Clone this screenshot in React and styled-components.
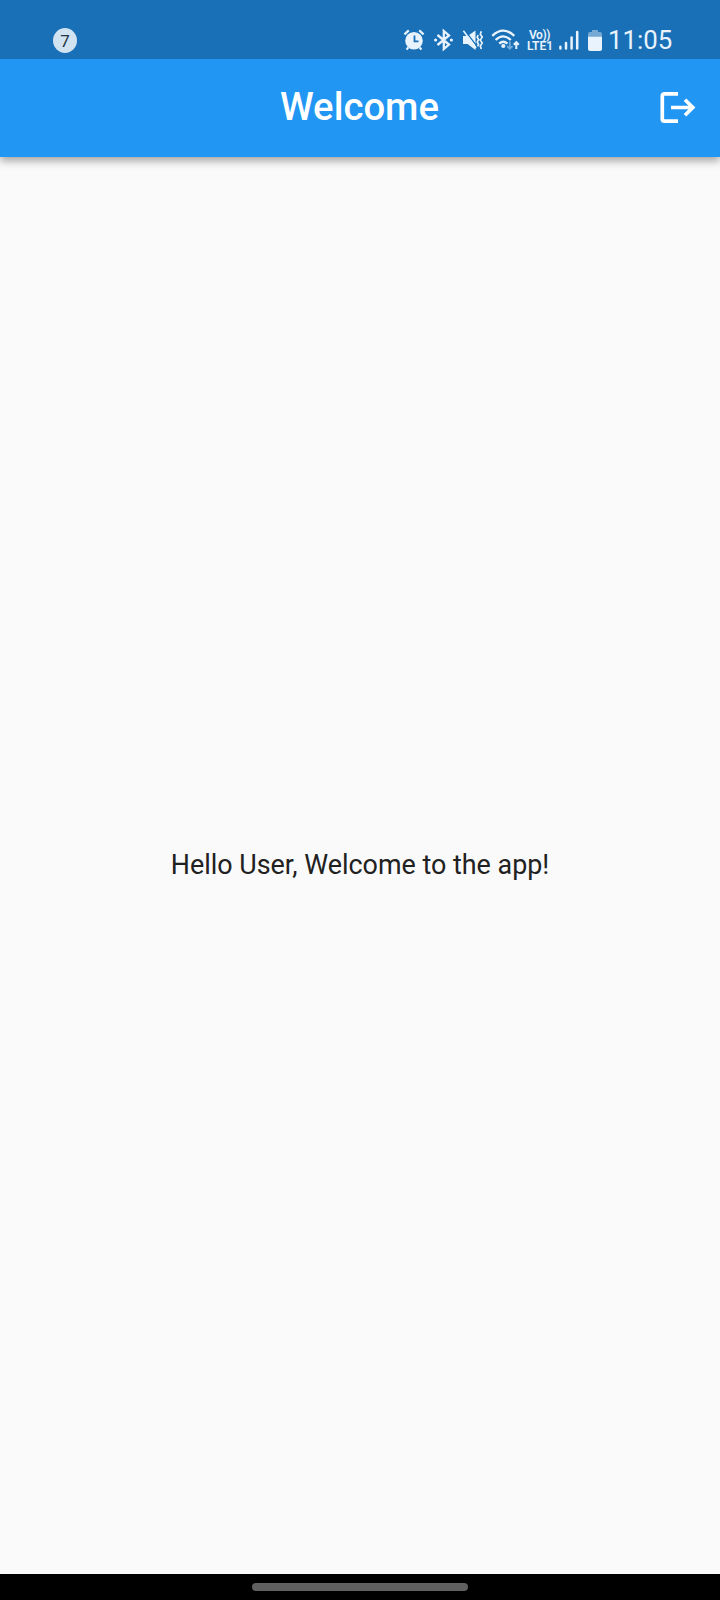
import React from 'react';
import styled, { createGlobalStyle } from 'styled-components';

const GlobalStyle = createGlobalStyle`
  * { box-sizing: border-box; }
  body { margin: 0; background: #fafafa; font-family: Roboto, sans-serif; }
`;

const Screen = styled.div`
  display: flex;
  flex-direction: column;
  width: 720px;
  height: 1600px;
  background: #fafafa;
`;

const StatusBar = styled.header`
  display: flex;
  align-items: flex-start;
  justify-content: space-between;
  height: 59px;
  padding: 28px 48px 0 53px;
  background: #1a70b7;
`;

const Notification = styled.span`
  width: 24px;
  height: 25px;
  border-radius: 50%;
  background: #d1e2f1;
  color: #26353f;
  font-size: 17px;
  line-height: 26px;
  text-align: center;
`;

const StatusIcons = styled.div`
  display: flex;
  align-items: flex-start;
  color: #e8f3fd;
`;

const Glyph = styled.svg`
  display: block;
  flex: none;
  margin-right: ${(p) => p.$gap || 0}px;
  overflow: visible;
`;

const Network = styled.div`
  width: 28px;
  margin-right: 4px;
  padding-top: 2px;
  font-family: Roboto, sans-serif;
  font-size: 12px;
  font-weight: 600;
  line-height: 11px;
  text-align: left;
  white-space: nowrap;
`;

const NetworkLine = styled.div`
  padding-left: ${(p) => p.$indent || 0}px;
  letter-spacing: ${(p) => p.$tracking}px;
`;

const Clock = styled.time`
  width: 64px;
  font-size: 25.8px;
  line-height: 24px;
  white-space: nowrap;
`;

const AppBar = styled.div`
  display: grid;
  grid-template-columns: 84px 1fr 84px;
  align-items: center;
  height: 98px;
  background: #2196f3;
  box-shadow: 0 4px 8px rgba(0, 0, 0, 0.34);
  clip-path: inset(0 0 -16px 0);
  color: #fff;
`;

const Title = styled.h1`
  grid-column: 2;
  margin: 0;
  padding: 0 1px 2px 0;
  font-size: 38.3px;
  font-weight: 500;
  line-height: 44px;
  text-align: center;
`;

const LogoutButton = styled.button`
  display: flex;
  padding: 0 0 0 24px;
  border: 0;
  background: none;
  color: inherit;
`;

const Content = styled.main`
  display: flex;
  flex: 1;
  align-items: center;
  justify-content: center;
`;

const Greeting = styled.p`
  margin: 0;
  padding-bottom: 2px;
  color: #212121;
  font-size: 26.9px;
  line-height: 32px;
  white-space: nowrap;
`;

const NavigationBar = styled.footer`
  display: flex;
  justify-content: center;
  height: 26px;
  padding-top: 9px;
  background: #000;
`;

const Handle = styled.div`
  width: 216px;
  height: 8px;
  border-radius: 4px;
  background: #606060;
`;

const AlarmIcon = () => (
  <Glyph width="20" height="24" $gap={10} fill="currentColor">
    <path d="M.4 6.4 4.8 2.4M19.6 6.4 15.2 2.4M4.3 19.3 2.6 21.6M15.7 19.3 17.4 21.6" stroke="currentColor" strokeWidth="2.2" />
    <circle cx="10" cy="12.7" r="8.8" />
    <path d="M10.5 7.5v5.8h4" fill="none" stroke="#1a70b7" strokeWidth="1.8" />
  </Glyph>
);

const BluetoothIcon = () => (
  <Glyph width="19" height="24" $gap={10} fill="none" stroke="currentColor" strokeWidth="2.3">
    <path d="M3.5 7 15 16.6 9.8 21.1V2.9l5.2 4.5L3.5 17" />
    <circle cx="1.6" cy="12" r="1.6" fill="currentColor" stroke="none" />
    <circle cx="17.4" cy="12" r="1.6" fill="currentColor" stroke="none" />
  </Glyph>
);

const MuteIcon = () => (
  <Glyph width="20" height="24" $gap={9} fill="none" stroke="currentColor">
    <path d="M0 8h4.6l7.9-5.5v19.5l-7.9-6H0z" fill="currentColor" stroke="none" />
    <path d="M1.5 2 14 18.4" stroke="#1a70b7" strokeWidth="1.3" />
    <path d="M.4 2.8 13 20" strokeWidth="1.6" />
    <path d="m15.1 7-.9 2.2 1.4 2.4-1.4 2.4 1.4 2.4-1 2M18.3 3.2l-1 2.9 1.9 3-1.9 3 1.9 3-1.9 3 1 2.9" strokeWidth="1.7" />
  </Glyph>
);

const WifiIcon = () => (
  <Glyph width="28" height="24" $gap={7} fill="none" stroke="currentColor" strokeWidth="2.3">
    <path d="M.3 7.8Q11-2.5 22.3 7.8M3.6 12Q11.2 4.8 18.8 12M7.2 15.6q4.1-3.8 8.2 0" />
    <circle cx="11.3" cy="18" r="2.1" fill="currentColor" stroke="none" />
    <path d="M17.8 13.4v7.4m-2.7-2.6 2.7 2.7 2.7-2.7" stroke="#75acd9" strokeWidth="1.7" />
    <path d="M24.3 21v-6m-2.5 1.7 2.5-2.5 2.5 2.5" strokeWidth="2" />
  </Glyph>
);

const SignalIcon = () => (
  <Glyph width="20" height="24" $gap={9} stroke="currentColor" strokeWidth="2.5" strokeLinecap="round">
    <path d="M1.4 20.6v-1.8M7 20.6v-5.5M12.6 20.6V9.6M18.2 20.6V4" />
  </Glyph>
);

const BatteryIcon = () => (
  <Glyph width="14" height="24" $gap={6}>
    <path d="M4 2h6v2h2q2 0 2 2v3H0V6q0-2 2-2h2z" fill="#75a9d4" />
    <path d="M0 8.8h14V21q0 2-2 2H2q-2 0-2-2z" fill="currentColor" />
  </Glyph>
);

const LogoutIcon = () => (
  <Glyph width="38" height="36" fill="none" stroke="currentColor" strokeWidth="3.7">
    <path d="M18 3.8H4.5Q2.3 3.8 2.3 6v23q0 2.2 2.2 2.2H18" />
    <path d="M11 17.5h22M25 9.7l7.8 7.8-7.8 7.8" />
  </Glyph>
);

export default function App() {
  return (
    <>
      <GlobalStyle />
      <Screen>
        <StatusBar>
          <Notification>7</Notification>
          <StatusIcons>
            <AlarmIcon />
            <BluetoothIcon />
            <MuteIcon />
            <WifiIcon />
            <Network>
              <NetworkLine $indent={2} $tracking={-0.4}>Vo))</NetworkLine>
              <NetworkLine $tracking={0}>LTE1</NetworkLine>
            </Network>
            <SignalIcon />
            <BatteryIcon />
            <Clock>11:05</Clock>
          </StatusIcons>
        </StatusBar>
        <AppBar>
          <Title>Welcome</Title>
          <LogoutButton aria-label="Log out">
            <LogoutIcon />
          </LogoutButton>
        </AppBar>
        <Content>
          <Greeting>Hello User, Welcome to the app!</Greeting>
        </Content>
        <NavigationBar>
          <Handle />
        </NavigationBar>
      </Screen>
    </>
  );
}
